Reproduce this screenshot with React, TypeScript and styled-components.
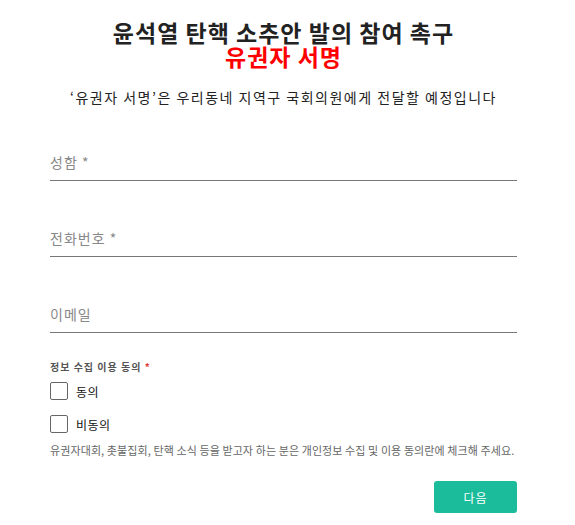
import React from 'react';
import styled, { createGlobalStyle } from 'styled-components';

const GlobalStyle = createGlobalStyle`
  html, body {
    margin: 0;
    padding: 0;
    background: #ffffff;
  }
  body {
    font-family: 'Noto Sans CJK KR', 'Noto Sans', sans-serif;
    color: #222222;
  }
`;

const Page = styled.div`
  width: 467px;
  padding: 20px 0 0 50px;
`;

const Title = styled.h1`
  margin: 0;
  text-align: center;
  font-size: 23px;
  line-height: 24px;
  letter-spacing: 1px;
  font-weight: 700;
  color: #222222;
`;

const Red = styled.span`
  display: block;
  color: #ff0000;
`;

const Lead = styled.p`
  margin: 19px 0 0;
  text-align: center;
  font-size: 14px;
  line-height: 20px;
  letter-spacing: 1.5px;
  color: #222222;
`;

const Form = styled.form`
  display: flex;
  flex-direction: column;
  margin-top: 45px;
`;

const Field = styled.input<{ $gap: number }>`
  display: block;
  width: 100%;
  box-sizing: border-box;
  margin-top: ${(p) => p.$gap}px;
  padding: 0 0 8px;
  border: 0;
  border-bottom: 1px solid #777777;
  font-family: inherit;
  font-size: 14px;
  line-height: 20px;
  letter-spacing: 1px;
  color: #222222;
  outline: none;
  background: transparent;

  &::placeholder {
    color: #888888;
  }
`;

const Legend = styled.div`
  margin-top: 27px;
  font-size: 10px;
  line-height: 14px;
  font-weight: 700;
  letter-spacing: 1px;
  color: #555555;
`;

const Star = styled.span`
  color: #e03b3b;
`;

const Choice = styled.label<{ $gap: number }>`
  display: flex;
  align-items: center;
  gap: 8px;
  margin-top: ${(p) => p.$gap}px;
  font-size: 12px;
  letter-spacing: 0.5px;
  color: #111111;
  cursor: pointer;
`;

const Box = styled.span`
  width: 16px;
  height: 16px;
  border: 1px solid #666666;
  border-radius: 2px;
  box-sizing: content-box;
`;

const Hint = styled.p`
  margin: 10px 0 0;
  font-size: 11px;
  line-height: 14px;
  letter-spacing: 0.1px;
  color: #666666;
`;

const Actions = styled.div`
  display: flex;
  justify-content: flex-end;
  margin-top: 24px;
`;

const NextButton = styled.button`
  width: 83px;
  height: 32px;
  border: 0;
  border-radius: 3px;
  background: #1bbc9b;
  color: #ffffff;
  font-family: inherit;
  font-size: 12px;
  letter-spacing: 1px;
  cursor: pointer;
`;

export default function App() {
  return (
    <>
      <GlobalStyle />
      <Page>
        <Title>
          윤석열 탄핵 소추안 발의 참여 촉구
          <Red>유권자 서명</Red>
        </Title>
        <Lead>‘유권자 서명’은 우리동네 지역구 국회의원에게 전달할 예정입니다</Lead>
        <Form onSubmit={(e) => e.preventDefault()}>
          <Field $gap={0} placeholder="성함 *" />
          <Field $gap={47} placeholder="전화번호 *" />
          <Field $gap={47} placeholder="이메일" />
          <Legend>
            정보 수집 이용 동의 <Star>*</Star>
          </Legend>
          <Choice $gap={8}>
            <Box />
            동의
          </Choice>
          <Choice $gap={15}>
            <Box />
            비동의
          </Choice>
          <Hint>유권자대회, 촛불집회, 탄핵 소식 등을 받고자 하는 분은 개인정보 수집 및 이용 동의란에 체크해 주세요.</Hint>
          <Actions>
            <NextButton type="button">다음</NextButton>
          </Actions>
        </Form>
      </Page>
    </>
  );
}
